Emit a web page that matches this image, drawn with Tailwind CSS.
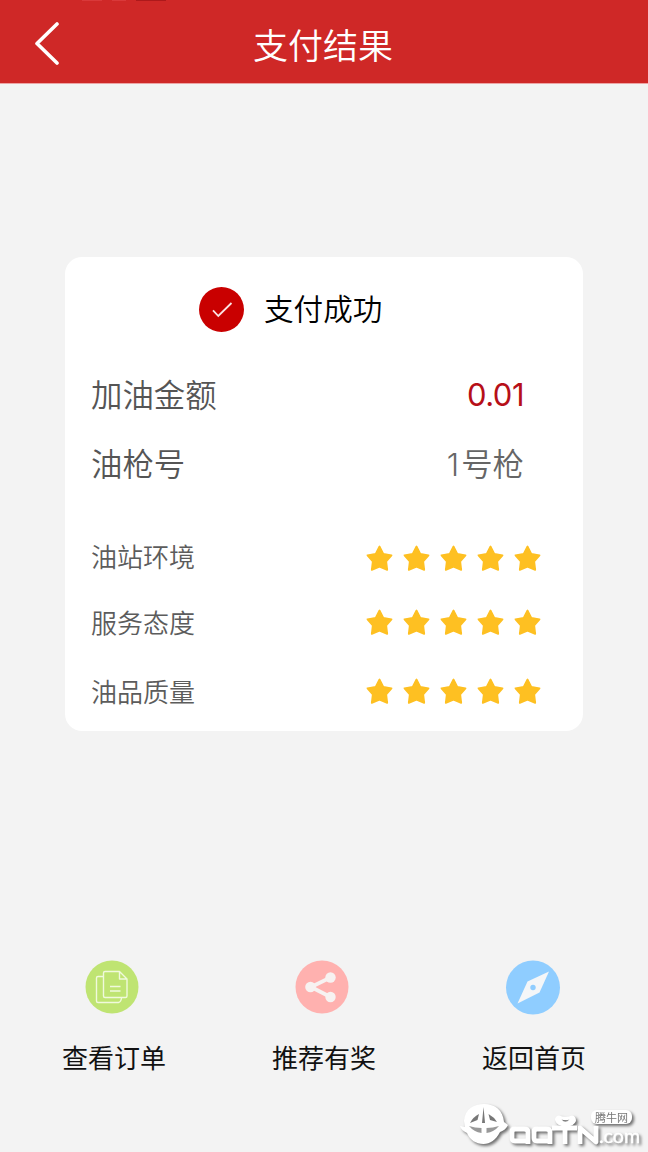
<!DOCTYPE html>
<html lang="zh-CN">
<head>
<meta charset="utf-8">
<meta name="viewport" content="width=device-width, initial-scale=1">
<title>支付结果</title>
<script src="https://cdn.jsdelivr.net/npm/@tailwindcss/browser@4"></script>
</head>
<body class="bg-[#f3f3f3] font-['Noto_Sans_CJK_SC',sans-serif]">
<svg class="hidden">
  <symbol id="star" viewBox="0 0 28 28"><path d="M14 2.500 L17.800 9.800 L26 11.300 L20.700 17.400 L21.700 25.800 L14 22.600 L6.300 25.800 L7.300 17.400 L2 11.300 L10.200 9.800 Z" fill="#fec022" stroke="#fec022" stroke-width="1.800" stroke-linejoin="round"/></symbol>
  <symbol id="stars" viewBox="0 0 176 28">
    <use href="#star" x="-0.5" y="0" width="28" height="28"/><use href="#star" x="36.500" y="0" width="28" height="28"/><use href="#star" x="73.500" y="0" width="28" height="28"/><use href="#star" x="110.500" y="0" width="28" height="28"/><use href="#star" x="147.500" y="0" width="28" height="28"/>
  </symbol>
</svg>
<div class="relative flex h-[1152px] w-[648px] flex-col overflow-hidden">
  <header class="grid h-[84px] shrink-0 grid-cols-[100px_1fr_100px] items-center border-b border-[#eda5a5] bg-[#cf2827] pt-[6px]">
    <svg class="ml-[33px] h-[46px] w-[28px]" viewBox="0 0 28 46" fill="none" stroke="#fff" stroke-width="3.600" stroke-linecap="round" stroke-linejoin="round"><path d="M24 2 L4 21.500 L24 41"/></svg>
    <h1 class="-mt-[1px] -ml-[2px] text-center text-[35px] leading-[50px] font-[350] text-white">支付结果</h1>
  </header>

  <main class="mt-[173px] ml-[65px] flex h-[474px] w-[518px] shrink-0 flex-col rounded-[17px] bg-white pr-[41px] pl-[26px]">
    <div class="flex h-[104px] items-center pl-[108px]">
      <svg class="mt-[1px] size-[45px]" viewBox="0 0 45 45"><circle cx="22.500" cy="22.500" r="22.500" fill="#c90000"/><path d="M14 23.300 L19.300 29 L32.500 16" fill="none" stroke="#fbe3e3" stroke-width="1.800"/></svg>
      <span class="-mt-[2px] ml-[20px] text-[29.600px] leading-[40px] text-black font-[350]">支付成功</span>
    </div>
    <div class="flex h-[69px] items-center justify-between pr-[18px] text-[31.400px] font-[350] text-[#555]">
      <span class="-mt-[4px]">加油金额</span><span class="font-['Inter'] text-[31px] font-normal tracking-[-0.5px] text-[#b60f18]">0.01</span>
    </div>
    <div class="flex h-[69px] items-center justify-between pr-[18px] text-[31.400px] font-[350] text-[#555]">
      <span class="-mt-[4px]">油枪号</span><span class="text-[#666]"><span class="mr-[2px] font-['Inter'] font-light">1</span>号枪</span>
    </div>
    <div class="mt-[26px] flex h-[66px] items-center justify-between text-[26px] font-[350] text-[#5c5c5c]">
      <span class="-mt-[5px]">油站环境</span><svg class="h-[28px] w-[176px]"><use href="#stars"/></svg>
    </div>
    <div class="-mt-[2px] flex h-[66px] items-center justify-between text-[26px] font-[350] text-[#5c5c5c]">
      <span class="-mt-[2px]">服务态度</span><svg class="h-[28px] w-[176px]"><use href="#stars"/></svg>
    </div>
    <div class="mt-[2px] flex h-[68px] items-center justify-between text-[26px] font-[350] text-[#5c5c5c]">
      <span class="-mt-[2px]">油品质量</span><svg class="h-[28px] w-[176px]"><use href="#stars"/></svg>
    </div>
  </main>

  <nav class="mt-[229px] flex gap-[106px] pl-[62px] text-[26px] leading-[36px] text-[#111]">
    <div class="flex w-[104px] flex-col items-center gap-[25px]">
      <svg class="-ml-[4px] size-[54px]" viewBox="0 0 54 54"><circle cx="27" cy="27" r="26.500" fill="#bfe472"/><g fill="none" stroke="#f0f9dc" stroke-width="1.400" stroke-linejoin="round"><path d="M18 16.500 H13 Q11.500 16.500 11.500 18 V41 Q11.500 42.500 13 42.500 H33.500 Q36 42 36.500 38"/><path d="M20 11.500 H34.500 L42 19 V36 Q42 37.500 40.500 37.500 H20 Q18.500 37.500 18.500 36 V13 Q18.500 11.500 20 11.500 Z M34.500 11.500 V19 H42"/><path d="M25 26.500 H35.500 M25 31 H35.500"/></g></svg>
      <span>查看订单</span>
    </div>
    <div class="flex w-[104px] flex-col items-center gap-[25px]">
      <svg class="-ml-[4px] size-[54px]" viewBox="0 0 54 54"><circle cx="27" cy="27" r="26.500" fill="#ffb1af"/><path d="M35.500 17.500 L16 27 L35.500 37" fill="none" stroke="#f7f2f1" stroke-width="3.800"/><g fill="#f7f2f1"><circle cx="35.500" cy="17.500" r="5.200"/><circle cx="15.500" cy="27" r="5.300"/><circle cx="35.500" cy="37" r="5.200"/></g></svg>
      <span>推荐有奖</span>
    </div>
    <div class="flex w-[104px] flex-col items-center gap-[25px]">
      <svg class="-ml-[3px] size-[54px] overflow-visible" viewBox="0 -0.5 54 54"><circle cx="27" cy="27" r="27" fill="#8fcdff"/><path d="M43 11 L33.500 32 L11.500 43 L21.500 21 Z" fill="#f4f6f8"/><circle cx="27" cy="27" r="2.700" fill="#8fcdff"/></svg>
      <span>返回首页</span>
    </div>
  </nav>

  <svg class="absolute top-[1096px] left-[448px] h-[56px] w-[200px] drop-shadow-[2px_2px_1.5px_rgba(0,0,0,0.55)]" viewBox="0 6 200 56">
    <path fill="#fff" d="M16 31 C17 19 26 14 36 14 C47 14 55 20 56 32 L60 35 C58 39 55 41 52 42 C48 50 42 54 35.500 54 C28 54 22 50 19 43 C15 41 13 39 12 36 L17 37 Z"/>
    <g fill="#777"><path d="M35.500 17 L37 33 H34 Z"/><path d="M22 33 Q25 27 31 24 L29.500 30 Z"/><path d="M49 32 Q46 27 40.500 24 L42 30 Z"/><path d="M21 36 Q27 38 33.500 38 V43 Q26 42 21 36 Z" fill="#999"/><path d="M51 36 Q45 38 38.500 38 V43 Q46 42 51 36 Z" fill="#999"/></g>
    <g fill="none" stroke="#fff" stroke-width="4.800" stroke-linejoin="round"><path d="M80 51 H67 Q64 51 64 48 V42 Q64 39 67 39 H76 Q80 39 80 42 V54"/><path d="M102 51 H89 Q86 51 86 48 V42 Q86 39 89 39 H98 Q102 39 102 42 V54"/><path d="M104 38 H129 M117 38 V54 M132 54 V38 L148 52 V36"/></g>
    <path fill-rule="evenodd" d="M107 30 Q107 26 111 25.500 Q117.500 28 124 25.500 Q128 26 128 31 Q126 36.500 117.500 36.500 Q109 36.500 107 30 Z M113.500 29.500 Q117.500 34 121.500 29.500 Q117.500 30.500 113.500 29.500 Z" fill="#fff"/>
    <rect x="143" y="20" width="41" height="14" rx="6" fill="#fff"/>
    <text x="147" y="31.500" font-family="Noto Sans CJK SC" font-size="11" fill="#777">腾牛网</text>
    <text x="151" y="53" font-family="Lato" font-size="19" fill="#fff" stroke="#fff" stroke-width="0.4" textLength="41" lengthAdjust="spacingAndGlyphs">.com</text>
  </svg>
  <div class="absolute top-0 left-[82px] flex gap-[10px]"><i class="h-px w-[20px] bg-[#d9393a]"></i><i class="h-px w-[14px] bg-[#d9393a]"></i><i class="h-px w-[30px] bg-[#ad191b]"></i></div>
</div>
</body>
</html>
